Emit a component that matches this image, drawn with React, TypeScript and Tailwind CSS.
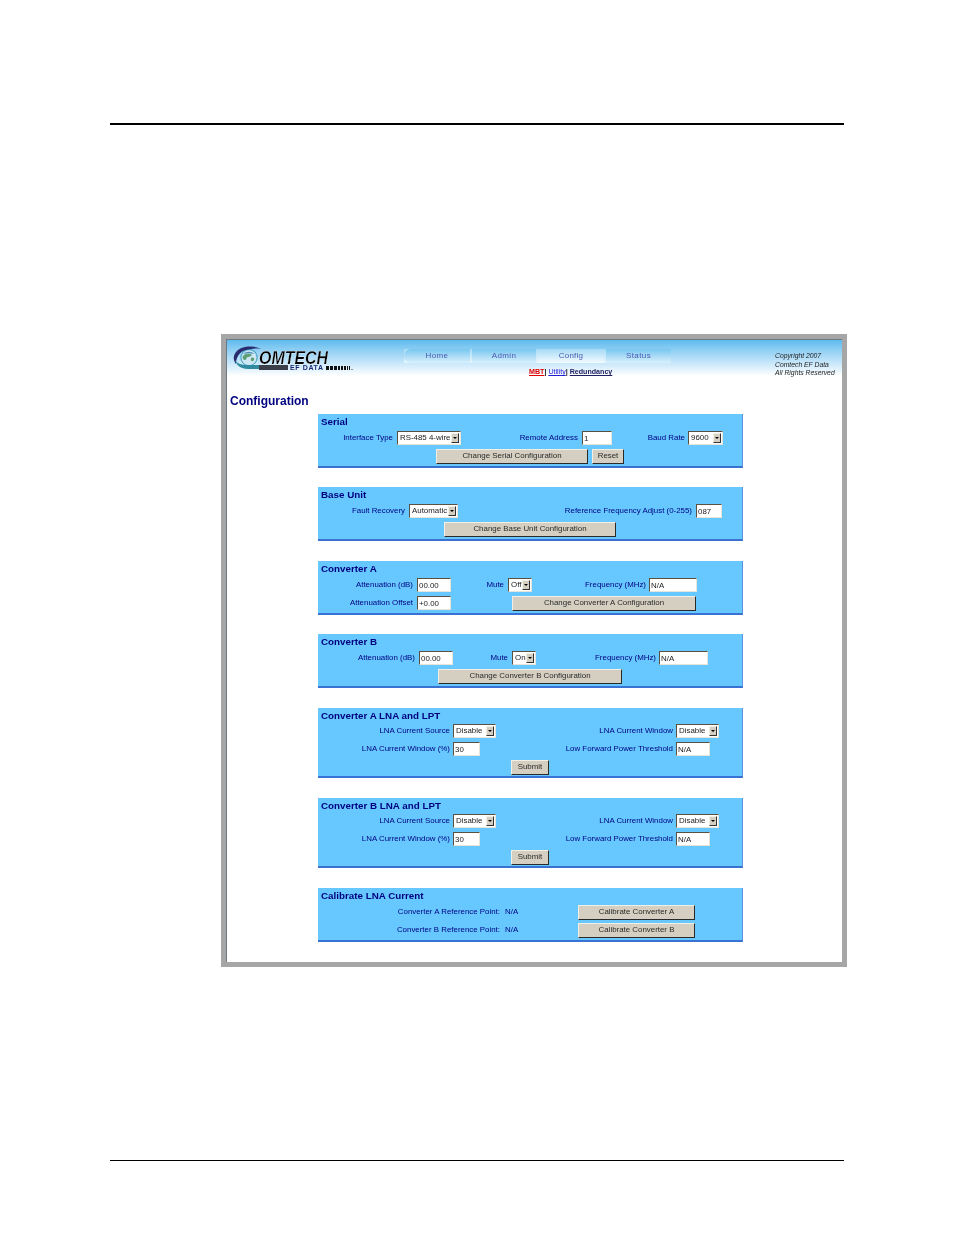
const FONT = "font-['Liberation_Sans',Arial,sans-serif]";

function Label({ className = '', children }: { className?: string; children: React.ReactNode }) {
  return <span className={`text-right whitespace-nowrap text-[7.9px] text-[#000080] ${className}`}>{children}</span>;
}

function Input({ value, className = '' }: { value: string; className?: string }) {
  return (
    <input
      readOnly
      value={value}
      className={`h-[14px] bg-white px-[1px] text-[7.9px] text-[#222] border border-t-[#5a5040] border-l-[#5a5040] border-b-[#e8e4d8] border-r-[#e8e4d8] outline-none ${className}`}
    />
  );
}

function Select({ value, className = '' }: { value: string; className?: string }) {
  return (
    <div className={`flex h-[14px] items-center justify-between bg-white pl-[2px] pr-[1px] border border-t-[#5a5040] border-l-[#5a5040] border-b-[#e8e4d8] border-r-[#e8e4d8] ${className}`}>
      <span className="whitespace-nowrap text-[7.9px] text-[#222]">{value}</span>
      <span className="flex h-[10px] w-[8px] shrink-0 items-center justify-center bg-[#d4cfc0] border border-t-[#f2efe6] border-l-[#f2efe6] border-b-[#333] border-r-[#333]">
        <svg width="4" height="2" viewBox="0 0 4 2"><path d="M0 0h4L2 2z" fill="#000" /></svg>
      </span>
    </div>
  );
}

function Btn({ label, className = '' }: { label: string; className?: string }) {
  return (
    <button className={`h-[15px] whitespace-nowrap bg-[#d4cfc0] text-center text-[7.9px] leading-none text-[#2a2a2a] border border-t-[#f2efe6] border-l-[#f2efe6] border-b-[#2a2a2a] border-r-[#2a2a2a] ${className}`}>
      {label}
    </button>
  );
}

function Row({ className = '', children }: { className?: string; children: React.ReactNode }) {
  return <div className={`flex h-[18px] items-center ${className}`}>{children}</div>;
}

function Panel({ title, compact = false, className = '', children }: { title: string; compact?: boolean; className?: string; children: React.ReactNode }) {
  return (
    <section className={`ml-[91px] w-[425px] bg-[#66c8ff] border-r border-b-2 border-r-[#5b93e0] border-b-[#3a72d4] ${className}`}>
      <h2 className={`${compact ? 'h-[14px]' : 'h-[15px]'} pl-[3px] text-[9.8px] font-bold leading-[16px] text-[#000080]`}>{title}</h2>
      {children}
    </section>
  );
}

function Logo() {
  return (
    <svg width="122" height="28" viewBox="0 0 122 28" className="shrink-0">
      <circle cx="17" cy="12.5" r="7" fill="#cfe6f4" />
      <path d="M11 11c2-3 6-3 8-2s-1 3-3 3-1 3-3 3-3-2-2-4zM19 13c2-1 4 0 3 2s-4 2-3-2z" fill="#5f9f78" />
      <path d="M11 9c3-3 9-3 11 0-3-1-8-1-11 0z" fill="#4f8fb8" />
      <circle cx="17" cy="12.5" r="8.2" fill="none" stroke="#3a9cb4" strokeWidth="1" />
      <path d="M30 4C21 0 9 1 4 7 1 11 1 15 4 19 4 14 6 9 11 6c5-2 13-3 19-2z" fill="#2a2a70" />
      <path d="M3 15c1 5 6 9 13 9h11v-4H16C10 20 5 19 3 15z" fill="#2f8aa0" />
      <rect x="27" y="20" width="29" height="5" fill="#3a3f4a" />
      <text x="27" y="19" fontSize="17.5" fontStyle="italic" fontWeight="700" fill="#000" stroke="#fff" strokeWidth="0.25" textLength="69" lengthAdjust="spacingAndGlyphs" fontFamily="'Liberation Sans',Arial,sans-serif">OMTECH</text>
      <text x="58" y="25" fontSize="7" fontWeight="700" fill="#1a2a78" textLength="33" fontFamily="'Liberation Sans',Arial,sans-serif">EF DATA</text>
      <path d="M94 21h3v4h-3zM98 21h3v4h-3zM102 21h3v4h-3zM106 21h2v4h-2zM109 21h2v4h-2zM112 21h2v4h-2zM115 21h1v4h-1zM117 21h1v4h-1z" fill="#111" />
      <circle cx="120" cy="24.5" r="0.6" fill="#333" />
    </svg>
  );
}

const tabClass = 'flex h-[14px] items-center justify-center text-[8px] tracking-[0.4px] text-[#4a5ab0] bg-gradient-to-b from-[#76c6f0] to-[#d8f0fc]';

function Header() {
  return (
    <header className="flex h-[41px] bg-gradient-to-b from-[#5cbbee] from-0% to-white to-[88%]">
      <div className="ml-[5px] mt-[5px]">
        <Logo />
      </div>
      <div className="ml-[50px] mt-[9px] w-[267px]">
        <nav className="flex gap-[2px] bg-gradient-to-b from-[#a8dcf6] to-[#e8f6fd]">
          <a className={`${tabClass} w-[66px] rounded-l-[7px]`}>Home</a>
          <a className={`${tabClass} w-[64px]`}>Admin</a>
          <a className="flex h-[14px] w-[66px] items-center justify-center bg-gradient-to-b from-[#a4daf6] to-[#f4fbfe] text-[8px] tracking-[0.2px] text-[#4a5ab0]">Config</a>
          <a className={`${tabClass} w-[65px]`}>Status</a>
        </nav>
        <div className="mt-[4px] ml-[125px] flex whitespace-nowrap text-[7.1px] font-bold leading-[10px]">
          <a className="text-[#e00000] underline">MBT</a>
          <span className="text-[#222]">|</span>
          <a className="ml-[2px] font-normal text-[#2020d0] underline">Utility</a>
          <span className="text-[#222]">|</span>
          <a className="ml-[2px] text-[#202060] underline">Redundancy</a>
        </div>
      </div>
      <div className="ml-[104px] mt-[12px] whitespace-nowrap text-[6.8px] italic leading-[8.6px] text-[#222]">
        <p>Copyright 2007</p>
        <p>Comtech EF Data</p>
        <p>All Rights Reserved</p>
      </div>
    </header>
  );
}

function LnaPanel({ title, className = '' }: { title: string; className?: string }) {
  return (
    <Panel title={title} compact className={className}>
      <Row>
        <Label className="w-[132px]">LNA Current Source</Label>
        <Select value="Disable" className="ml-[3px] w-[43px]" />
        <Label className="w-[177px]">LNA Current Window</Label>
        <Select value="Disable" className="ml-[3px] w-[43px]" />
      </Row>
      <Row>
        <Label className="w-[132px]">LNA Current Window (%)</Label>
        <Input value="30" className="ml-[3px] w-[27px]" />
        <Label className="w-[193px]">Low Forward Power Threshold</Label>
        <Input value="N/A" className="ml-[3px] w-[34px]" />
      </Row>
      <Row className="pl-[193px]">
        <Btn label="Submit" className="w-[38px]" />
      </Row>
    </Panel>
  );
}

export default function App() {
  return (
    <div className={`min-h-[1235px] bg-white px-[110px] pt-[123px] ${FONT}`}>
      <div className="h-[2px] bg-black" />

      <div className="ml-[111px] mt-[209px] h-[633px] w-[626px] border-[5px] border-[#a6a6a6] blur-[0.4px]">
        <div className="h-full border-t border-l border-[#6e7a82] bg-white">
          <Header />
          <h1 className="ml-[3px] mt-[13px] h-[14px] text-[12px] font-bold leading-[14px] text-[#000080]">Configuration</h1>

          <Panel title="Serial" className="mt-[6px]">
            <Row>
              <Label className="w-[75px]">Interface Type</Label>
              <Select value="RS-485 4-wire" className="ml-[4px] w-[64px]" />
              <Label className="w-[117px]">Remote Address</Label>
              <Input value="1" className="ml-[4px] w-[30px]" />
              <Label className="w-[73px]">Baud Rate</Label>
              <Select value="9600" className="ml-[3px] w-[35px]" />
            </Row>
            <Row className="gap-[4px] pl-[118px]">
              <Btn label="Change Serial Configuration" className="w-[152px]" />
              <Btn label="Reset" className="w-[32px]" />
            </Row>
            <div className="h-[1px]" />
          </Panel>

          <Panel title="Base Unit" className="mt-[19px]">
            <Row>
              <Label className="w-[87px]">Fault Recovery</Label>
              <Select value="Automatic" className="ml-[4px] w-[49px]" />
              <Label className="w-[234px]">Reference Frequency Adjust (0-255)</Label>
              <Input value="087" className="ml-[4px] w-[26px]" />
            </Row>
            <Row className="pl-[126px]">
              <Btn label="Change Base Unit Configuration" className="w-[172px]" />
            </Row>
            <div className="h-[1px]" />
          </Panel>

          <Panel title="Converter A" className="mt-[20px]">
            <Row>
              <Label className="w-[95px]">Attenuation (dB)</Label>
              <Input value="00.00" className="ml-[4px] w-[34px]" />
              <Label className="w-[53px]">Mute</Label>
              <Select value="Off" className="ml-[4px] w-[24px]" />
              <Label className="w-[114px]">Frequency (MHz)</Label>
              <Input value="N/A" className="ml-[3px] w-[48px]" />
            </Row>
            <Row>
              <Label className="w-[95px]">Attenuation Offset</Label>
              <Input value="+0.00" className="ml-[4px] w-[34px]" />
              <Btn label="Change Converter A Configuration" className="ml-[61px] w-[184px]" />
            </Row>
            <div className="h-[1px]" />
          </Panel>

          <Panel title="Converter B" className="mt-[19px]">
            <Row>
              <Label className="w-[97px]">Attenuation (dB)</Label>
              <Input value="00.00" className="ml-[4px] w-[34px]" />
              <Label className="w-[55px]">Mute</Label>
              <Select value="On" className="ml-[4px] w-[24px]" />
              <Label className="w-[120px]">Frequency (MHz)</Label>
              <Input value="N/A" className="ml-[3px] w-[49px]" />
            </Row>
            <Row className="pl-[120px]">
              <Btn label="Change Converter B Configuration" className="w-[184px]" />
            </Row>
            <div className="h-[1px]" />
          </Panel>

          <LnaPanel title="Converter A LNA and LPT" className="mt-[20px]" />
          <LnaPanel title="Converter B LNA and LPT" className="mt-[20px]" />

          <Panel title="Calibrate LNA Current" className="mt-[20px]">
            <Row>
              <Label className="w-[182px]">Converter A Reference Point:</Label>
              <Label className="ml-[5px] w-[13px]">N/A</Label>
              <Btn label="Calibrate Converter A" className="ml-[60px] w-[117px]" />
            </Row>
            <Row>
              <Label className="w-[182px]">Converter B Reference Point:</Label>
              <Label className="ml-[5px] w-[13px]">N/A</Label>
              <Btn label="Calibrate Converter B" className="ml-[60px] w-[117px]" />
            </Row>
            <div className="h-[1px]" />
          </Panel>
        </div>
      </div>

      <div className="mt-[193px] h-px bg-black" />
    </div>
  );
}
